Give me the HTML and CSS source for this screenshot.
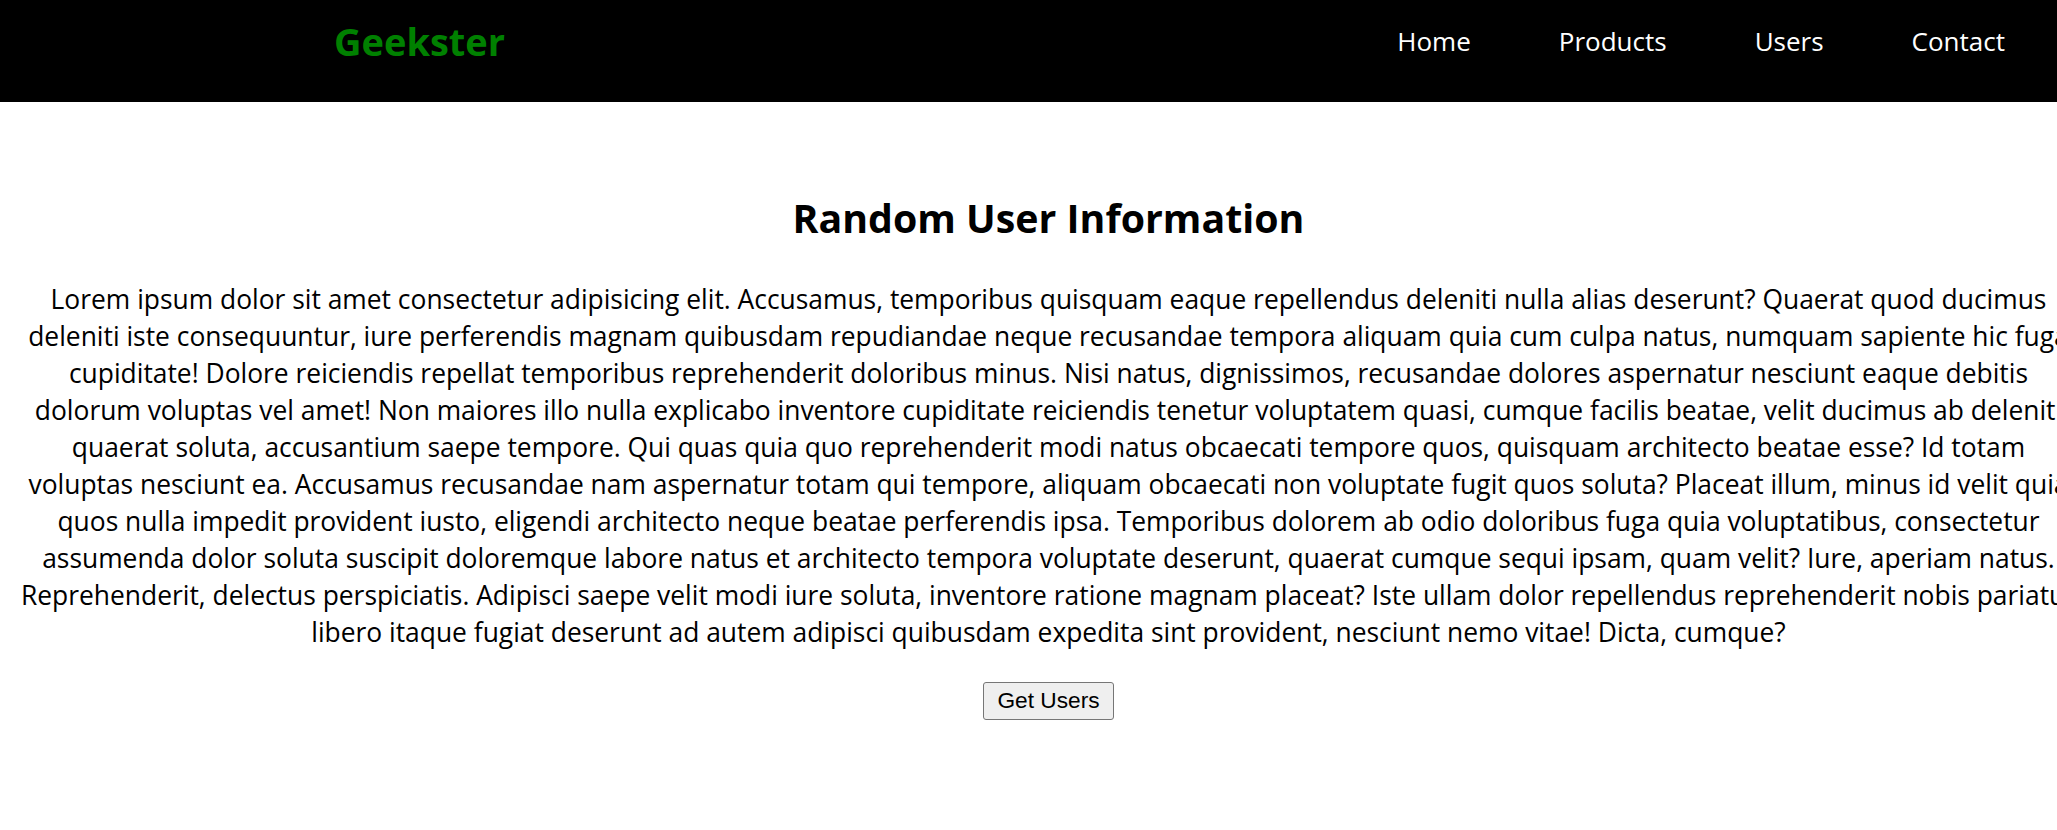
FILE: index.html
```
<!DOCTYPE html>
<html lang="en">
<head>
<meta charset="utf-8">
<title>Geekster</title>
<link rel="stylesheet" href="styles.css">
</head>
<body>
<header class="topbar">
  <div class="logo">Geekster</div>
  <nav class="nav">
    <a class="nav-link" href="#">Home</a>
    <a class="nav-link" href="#">Products</a>
    <a class="nav-link" href="#">Users</a>
    <a class="nav-link" href="#">Contact</a>
  </nav>
</header>
<main class="content">
  <h1 class="title">Random User Information</h1>
  <p class="intro"> Lorem ipsum dolor sit amet consectetur adipisicing elit. Accusamus, temporibus quisquam eaque repellendus deleniti nulla alias deserunt? Quaerat quod ducimus deleniti iste consequuntur, iure perferendis magnam quibusdam repudiandae neque recusandae tempora aliquam quia cum culpa natus, numquam sapiente hic fuga cupiditate! Dolore reiciendis repellat temporibus reprehenderit doloribus minus. Nisi natus, dignissimos, recusandae dolores aspernatur nesciunt eaque debitis dolorum voluptas vel amet! Non maiores illo nulla explicabo inventore cupiditate reiciendis tenetur voluptatem quasi, cumque facilis beatae, velit ducimus ab deleniti quaerat soluta, accusantium saepe tempore. Qui quas quia quo reprehenderit modi natus obcaecati tempore quos, quisquam architecto beatae esse? Id totam voluptas nesciunt ea. Accusamus recusandae nam aspernatur totam qui tempore, aliquam obcaecati non voluptate fugit quos soluta? Placeat illum, minus id velit quia quos nulla impedit provident iusto, eligendi architecto neque beatae perferendis ipsa. Temporibus dolorem ab odio doloribus fuga quia voluptatibus, consectetur assumenda dolor soluta suscipit doloremque labore natus et architecto tempora voluptate deserunt, quaerat cumque sequi ipsam, quam velit? Iure, aperiam natus. Reprehenderit, delectus perspiciatis. Adipisci saepe velit modi iure soluta, inventore ratione magnam placeat? Iste ullam dolor repellendus reprehenderit nobis pariatur libero itaque fugiat deserunt ad autem adipisci quibusdam expedita sint provident, nesciunt nemo vitae! Dicta, cumque?</p>
  <div class="actions">
    <button class="btn" type="button">Get Users</button>
  </div>
</main>
</body>
</html>
```
FILE: styles.css
```
html, body {
  margin: 0;
  padding: 0;
  overflow-x: hidden;
  background: #ffffff;
  color: #000000;
  font-family: "Open Sans", "Noto Sans", sans-serif;
}

.topbar {
  display: flex;
  justify-content: space-between;
  align-items: flex-start;
  height: 102px;
  box-sizing: border-box;
  padding: 0 52px 0 334px;
  background: #000000;
}

.logo {
  margin-top: 15px;
  font-size: 38px;
  font-weight: 700;
  color: #008000;
  line-height: normal;
}

.nav {
  display: flex;
  gap: 88px;
  margin-top: 23px;
}

.nav-link {
  font-size: 26px;
  line-height: normal;
  color: #ffffff;
  text-decoration: none;
}

.content {
  width: 100%;
  padding: 0 20px;
  text-align: center;
}

.title {
  margin: 89px 0 0;
  font-size: 39.3px;
  font-weight: 700;
  line-height: normal;
}

.intro {
  margin: 36px 0 0;
  font-size: 26.4px;
  line-height: 37px;
}

.actions {
  margin-top: 31px;
}

.btn {
  font-family: "Liberation Sans", Arial, sans-serif;
  font-size: 22.7px;
  line-height: normal;
  padding: 4px 13px 5px;
  color: #000000;
  background: #efefef;
  border: 1px solid #767676;
  border-radius: 3px;
}
```
